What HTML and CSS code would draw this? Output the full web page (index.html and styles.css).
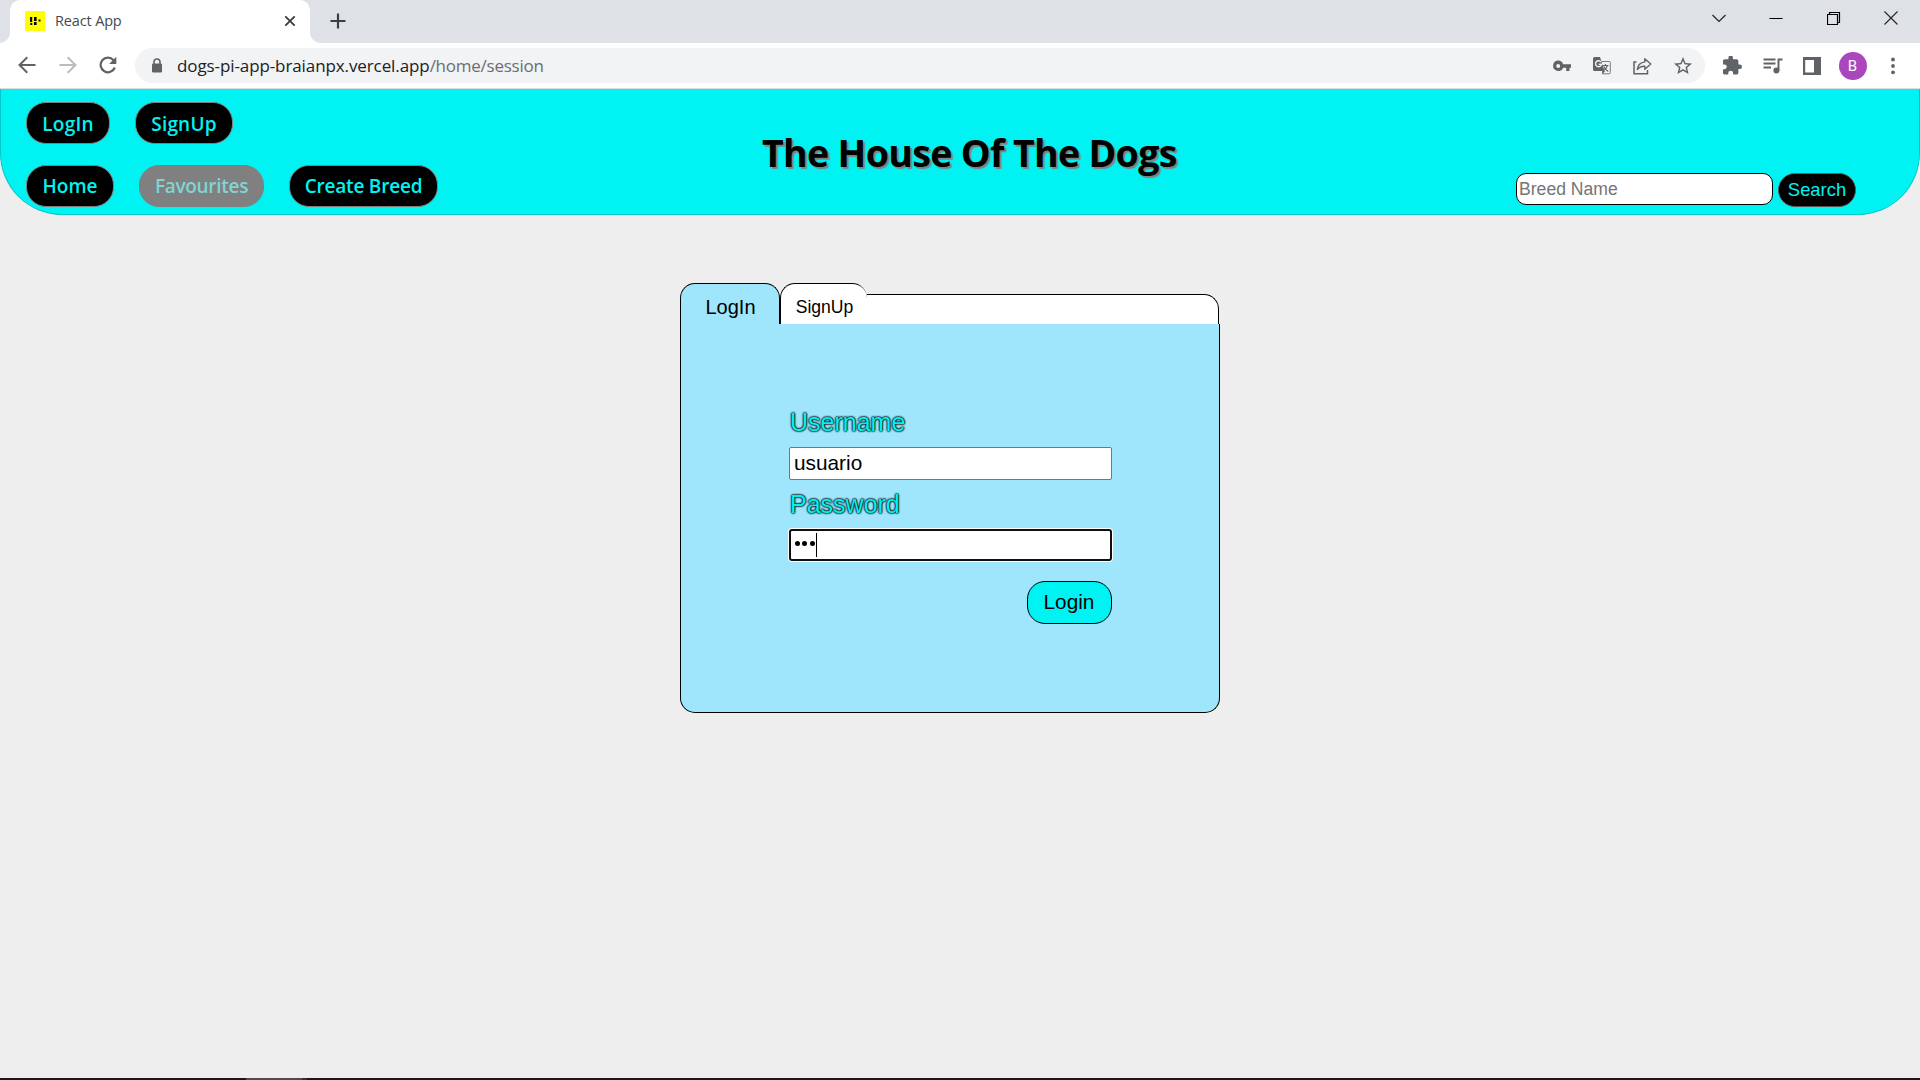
FILE: index.html
```html
<!DOCTYPE html>
<html lang="en">
<head>
<meta charset="utf-8">
<title>React App</title>
<link rel="stylesheet" href="styles.css">
</head>
<body>
<div class="tabstrip">
  <div class="tab">
    <svg class="favicon" width="20" height="20" viewBox="0 0 20 20"><path fill="#ff0" d="M0 0h20v20H0z"/><path d="M5 6h2.200v5H5zM9 6h2.600v4H9zM5.300 12h2v2h-2zM9 11h2.600v3H9zM13.500 8.500h2v2h-2z"/></svg>
    <span class="tab-title">React App</span>
    <svg class="tab-close" width="12" height="12" viewBox="0 0 12 12"><path d="M1.300 1.300l9.400 9.400M10.700 1.300l-9.400 9.400" stroke="#3c4043" stroke-width="1.900"/></svg>
  </div>
  <svg class="new-tab" width="16" height="16" viewBox="0 0 16 16"><path d="M8 .5v15M.5 8h15" stroke="#3c4043" stroke-width="2.200"/></svg>
  <div class="window-controls">
    <svg width="14" height="14" viewBox="0 0 14 14"><path d="M.5 4l6.500 6.500L13.500 4" fill="none" stroke="#222" stroke-width="1.200"/></svg>
    <svg width="14" height="14" viewBox="0 0 14 14"><path d="M.5 7.500h13" stroke="#000"/></svg>
    <svg width="14" height="14" viewBox="0 0 14 14"><path d="M.5 3.500h10v10H.5zM2.500 3.500v-2h10v10h-2" fill="none" stroke="#000" stroke-width="1.200"/></svg>
    <svg width="14" height="14" viewBox="0 0 14 14"><path d="M.5 .5l13 13M13.500 .5l-13 13" stroke="#222" stroke-width="1.100"/></svg>
  </div>
</div>
<div class="toolbar">
  <div class="nav">
    <svg width="18" height="18" viewBox="0 0 18 18"><path d="M17.500 9H2M9.300 1.200L1.500 9l7.800 7.800" fill="none" stroke="#5f6368" stroke-width="2"/></svg>
    <svg width="18" height="18" viewBox="0 0 18 18"><path d="M.5 9H16M8.700 1.200L16.500 9l-7.800 7.800" fill="none" stroke="#babcbe" stroke-width="2"/></svg>
    <svg width="18" height="18" viewBox="0 0 18 18"><path d="M15.800 11.500A7.300 7.300 0 1 1 14.500 4.200" fill="none" stroke="#5f6368" stroke-width="2.200"/><path d="M17.300 .8v7.200h-7.200z" fill="#5f6368"/></svg>
  </div>
  <div class="omnibox">
    <svg width="12" height="15" viewBox="0 0 12 15"><path d="M3 6V4a3 3 0 0 1 6 0v2" fill="none" stroke="#5f6368" stroke-width="1.600"/><rect x="1" y="5.500" width="10" height="9" rx="1.300" fill="#5f6368"/></svg>
    <span class="url"><span class="host">dogs-pi-app-braianpx.vercel.app</span><span class="path">/home/session</span></span>
    <div class="page-actions">
      <svg width="18" height="18" viewBox="0 0 18 18"><path fill="#5f6368" fill-rule="evenodd" d="M5.200 3.600a5.200 5.200 0 0 1 4.900 3.600H18v3.600h-1.500v3.300h-3.300v-3.300h-3.100A5.200 5.200 0 1 1 5.200 3.600zm0 3.400a2 2 0 1 0 0 4 2 2 0 0 0 0-4z"/></svg>
      <svg width="18" height="18" viewBox="0 0 18 18"><path d="M8 4.500h8.300q1 0 1 1v10.300q0 1-1 1H9.500" fill="none" stroke="#777b80"/><path d="M1.500 0H7l4.500 14H1.500Q0 14 0 12.500v-11Q0 0 1.500 0zM9.200 14h3L9 17.500z" fill="#5f6368"/><path d="M8 5A3 3 0 1 0 8.500 7.300H5.700" fill="none" stroke="#f1f3f4" stroke-width="1.400"/><path d="M9.500 8.500h6M12.500 7v1.500M14.300 8.500q-.8 3-3 4.500M10.800 9.500q1.500 3 4.500 5" fill="none" stroke="#5f6368" stroke-width="1.100"/></svg>
      <svg width="19" height="18" viewBox="0 0 19 18"><path d="M3.500 5H1v11.800h13.500V13" fill="none" stroke="#5f6368" stroke-width="1.500"/><path d="M11.800 1.800l6 5.200-6 5.200V9.300Q7 9 4.300 12.600 5 5.800 11.800 4.900z" fill="none" stroke="#5f6368" stroke-width="1.400" stroke-linejoin="round"/></svg>
      <svg width="18" height="18" viewBox="2 2 20 20"><path fill="#5f6368" d="M22 9.240l-7.190-.62L12 2 9.190 8.630 2 9.240l5.460 4.730L5.820 21 12 17.270 18.180 21l-1.630-7.030L22 9.240zM12 15.400l-3.760 2.270 1-4.280-3.320-2.880 4.380-.38L12 6.100l1.710 4.040 4.380.38-3.320 2.880 1 4.280L12 15.400z"/></svg>
    </div>
  </div>
  <div class="browser-actions">
    <svg width="19" height="19" viewBox="2 1.500 21 21"><path fill="#5f6368" d="M20.500 11H19V7c0-1.100-.9-2-2-2h-4V3.500a2.500 2.500 0 0 0-5 0V5H4c-1.100 0-1.990.9-1.990 2v3.800H3.500a2.700 2.700 0 0 1 0 5.400H2V20c0 1.100.9 2 2 2h3.800v-1.500a2.700 2.700 0 0 1 5.400 0V22H17c1.100 0 2-.9 2-2v-4h1.500a2.500 2.500 0 0 0 0-5z"/></svg>
    <svg width="20" height="18" viewBox="0 0 20 18"><path d="M.5 2.500h12M.5 6.500h12M.5 10.500h7.500M15.500 13.500V2.500h4" fill="none" stroke="#5f6368" stroke-width="1.900"/><circle cx="13.400" cy="13.500" r="3" fill="#5f6368"/></svg>
    <svg width="18" height="18" viewBox="0 0 18 18"><path fill="#5f6368" fill-rule="evenodd" d="M0 0h18v18H0zM2.200 3v12.500h8.800V3z"/></svg>
    <span class="avatar">B</span>
    <svg class="kebab" width="4" height="18" viewBox="0 0 4 18"><g fill="#5f6368"><circle cx="2" cy="2.500" r="1.900"/><circle cx="2" cy="9" r="1.900"/><circle cx="2" cy="15.300" r="1.900"/></g></svg>
  </div>
</div>
<header class="header">
  <nav class="menus">
    <div class="menu-row session"><a class="pill pill-login">LogIn</a><a class="pill pill-signup">SignUp</a></div>
    <div class="menu-row"><a class="pill pill-home">Home</a><a class="pill pill-fav disabled">Favourites</a><a class="pill pill-create">Create Breed</a></div>
  </nav>
  <h1 class="title">The House Of The Dogs</h1>
  <form class="search">
    <input class="search-input" placeholder="Breed Name">
    <button class="search-button" type="button">Search</button>
  </form>
</header>
<main class="page">
  <section class="card">
    <div class="card-tabs">
      <div class="card-tab active">LogIn</div>
      <div class="card-tab">SignUp</div>
      <div class="card-strip"></div>
    </div>
    <form class="card-body">
      <label class="label">Username</label>
      <div class="field">usuario</div>
      <label class="label">Password</label>
      <div class="field focused"><i class="dot"></i><i class="dot"></i><i class="dot"></i><i class="caret"></i></div>
      <button class="submit" type="button">Login</button>
    </form>
  </section>
</main>
<footer class="taskbar"><span class="task-active"></span><span class="task-edge"></span></footer>
</body>
</html>
```
FILE: styles.css
```css
* { box-sizing: border-box; }
body {
  margin: 0;
  height: 1080px;
  display: flex;
  flex-direction: column;
  overflow: hidden;
  background: #eee;
  font-family: "Liberation Sans", Arial, sans-serif;
}
svg { display: block; flex: none; }

.tabstrip {
  height: 43px;
  flex: none;
  display: flex;
  padding-left: 10px;
  background: #dee1e6;
}
.tab {
  position: relative;
  width: 300px;
  display: flex;
  align-items: center;
  padding: 0 14px 1px 15px;
  background: #fff;
  border-radius: 10px 10px 0 0;
}
.tab::before, .tab::after {
  content: "";
  position: absolute;
  bottom: 0;
  width: 10px;
  height: 10px;
}
.tab::before { left: -10px; background: radial-gradient(circle at 0 0, transparent 9.5px, #fff 10px); }
.tab::after { right: -10px; background: radial-gradient(circle at 100% 0, transparent 9.5px, #fff 10px); }
.tab-title {
  margin-left: 10px;
  padding-bottom: 1px;
  flex: 1;
  font: 14.500px/20px "Open Sans", "Noto Sans", sans-serif;
  letter-spacing: -0.15px;
  color: #45494d;
}
.new-tab { margin: 13px 0 0 19.500px; }
.window-controls {
  margin-left: auto;
  display: flex;
  gap: 43.500px;
  padding: 11px 22px 0 0;
}

.toolbar {
  height: 46px;
  flex: none;
  display: flex;
  align-items: flex-start;
  padding: 5px 25px 0 18px;
  background: #fff;
  border-bottom: 1px solid #dadce0;
}
.nav { display: flex; gap: 22.500px; width: 117px; padding-top: 8px; }
.omnibox {
  width: 1570px;
  height: 35px;
  display: flex;
  align-items: center;
  padding: 0 13px 0 16px;
  border-radius: 18px;
  background: #f1f3f4;
}
.url {
  margin-left: 14px;
  font: 17px/24px "Open Sans", "Noto Sans", sans-serif;
  white-space: nowrap;
}
.host { color: #202124; letter-spacing: -0.1px; }
.path { color: #6a6e73; letter-spacing: -0.24px; }
.page-actions { margin-left: auto; display: flex; gap: 22px; }
.browser-actions {
  margin-left: 18px;
  flex: 1;
  height: 35px;
  display: flex;
  align-items: center;
  gap: 20.500px;
}
.avatar {
  width: 28px;
  height: 28px;
  margin-left: -3px;
  border-radius: 50%;
  background: #ab47bc;
  color: #fff;
  font: 15px/28px Roboto, sans-serif;
  text-align: center;
}
.kebab { margin-left: auto; }

.header {
  height: 126px;
  flex: none;
  display: flex;
  padding: 0 63px 0 25px;
  background: #00f3f3;
  border: 1px solid #00c8cc;
  border-top: 0;
  border-radius: 0 0 62px 62px;
}
.menus { width: 736px; padding-top: 13px; display: flex; flex-direction: column; gap: 21px; }
.menu-row { display: flex; gap: 25px; }
.pill {
  height: 42px;
  border: 1px solid gray;
  border-radius: 20px;
  background: #000;
  color: #00f3f3;
  font: 600 19px/41px "Open Sans", "Noto Sans", sans-serif;
  text-align: center;
  white-space: nowrap;
}
.session .pill { line-height: 43px; }
.pill-login { width: 84px; letter-spacing: 0.2px; }
.pill-signup { width: 98px; letter-spacing: 0.2px; }
.pill-home { width: 88px; }
.pill-fav { width: 125px; letter-spacing: -0.3px; }
.pill-create { width: 149px; letter-spacing: -0.2px; }
.disabled { background: gray; color: #80d4d4; }
.title {
  margin: 37px 0 0;
  font: 700 37.500px/54px "Open Sans", "Noto Sans", sans-serif;
  letter-spacing: -0.66px;
  white-space: nowrap;
  color: #000;
  text-shadow: 2px 2px 1px gray;
}
.search { margin: 84px 0 0 auto; display: flex; align-items: flex-start; gap: 5px; }
.search-input {
  width: 257px;
  height: 32px;
  padding: 1px 2px;
  border: 1px solid #000;
  border-radius: 10px;
  background: #fff;
  font: 17.600px "Liberation Sans", Arial, sans-serif;
}
.search-button {
  width: 78px;
  height: 34px;
  padding: 0;
  border: 1px solid #555;
  border-radius: 17px;
  background: #000;
  color: #00f3f3;
  font: 18.400px "Liberation Sans", Arial, sans-serif;
}

.page { flex: 1; padding: 68px 0 0 680px; }
.card { width: 540px; }
.card-tabs { height: 41px; display: flex; align-items: flex-end; }
.card-tab {
  width: 87px;
  height: 41px;
  padding-left: 1px;
  border: 1px solid #000;
  border-width: 1px 0 0 1px;
  border-radius: 15px 15px 0 0;
  background: #fff;
  font-size: 17.600px;
  line-height: 46px;
  text-align: center;
}
.card-tab.active {
  width: 100px;
  border-right-width: 1px;
  background: #9fe6fc;
  font-size: 20px;
}
.card-strip {
  width: 352px;
  height: 30px;
  border: 1px solid #000;
  border-width: 1px 1px 0 0;
  border-radius: 0 15px 0 0;
  background: #fff;
}
.card-body {
  height: 389px;
  display: flex;
  flex-direction: column;
  padding: 84px 107px 0 108px;
  border: 1px solid #000;
  border-top: 0;
  border-radius: 0 0 15px 15px;
  background: #9fe6fc;
}
.label {
  height: 39px;
  padding-left: 1px;
  font-size: 25px;
  line-height: 29px;
  color: #00f3f3;
  text-shadow: 0 0 2px #000, 0 0 2px #000, 0 0 2px #000;
}
.field {
  height: 33px;
  flex: none;
  margin-bottom: 10px;
  padding: 0 5px 2px 4px;
  display: flex;
  align-items: center;
  border: 1px solid #767676;
  border-radius: 2px;
  background: #fff;
  font-size: 20.800px;
}
.field.focused {
  height: 32px;
  margin-bottom: 11px;
  border: 2px solid #101010;
  border-radius: 3px;
  box-shadow: 0 0 0 1px #fff;
  padding: 0 4px 1px;
}
.dot { width: 5px; height: 5px; margin: 0 2.300px 2px 0; border-radius: 50%; background: #000; }
.caret { width: 1px; height: 24px; margin-left: -1px; background: #000; }
.submit {
  align-self: flex-end;
  width: 85px;
  height: 43px;
  margin-top: 9px;
  padding: 0 1px 2px 0;
  border: 1px solid #000;
  border-radius: 18px;
  background: #00f3f3;
  color: #000;
  font: 20.800px "Liberation Sans", Arial, sans-serif;
}

.taskbar { height: 2px; flex: none; display: flex; padding-left: 246px; background: #1b1718; }
.task-active { width: 56px; background: #4f4b4c; }
.task-edge { width: 5px; background: #343031; }
```
